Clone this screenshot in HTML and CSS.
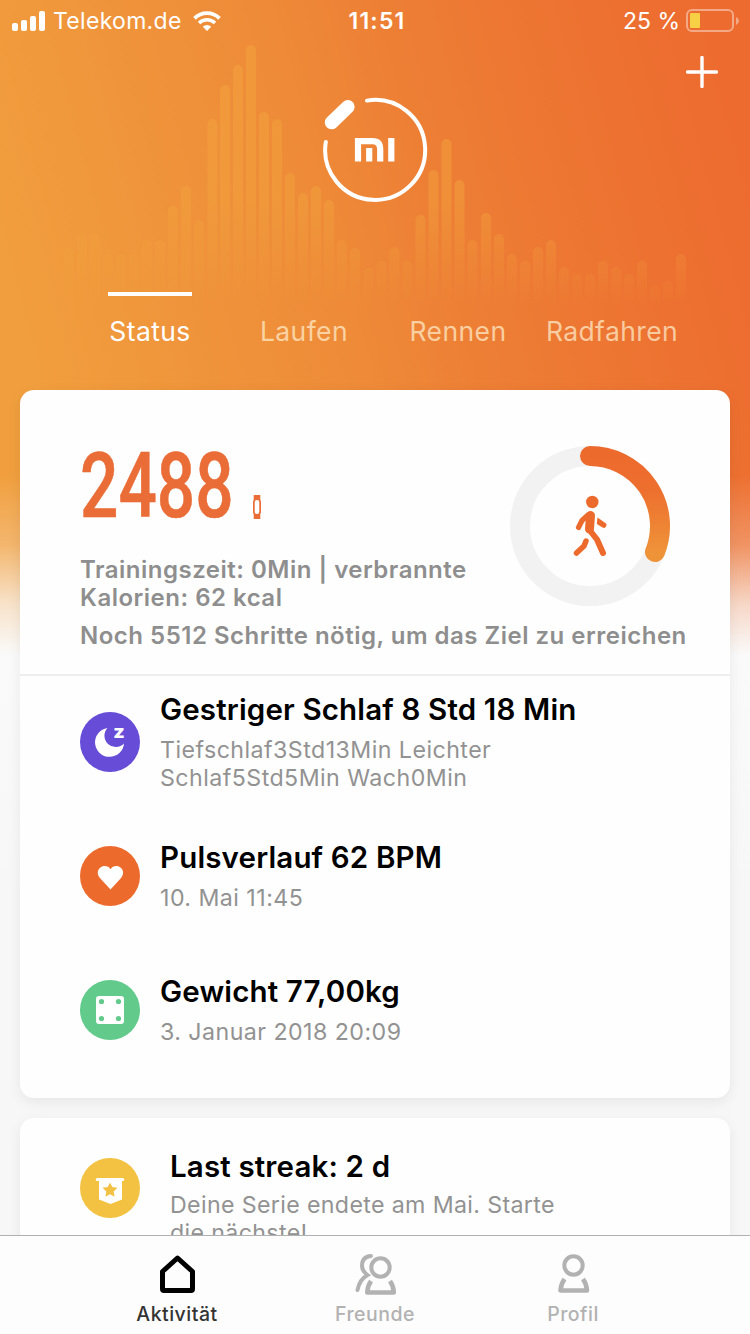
FILE: index.html
```html
<!DOCTYPE html>
<html lang="de">
<head>
  <meta charset="UTF-8">
  <title>Mi Fit — Aktivität</title>
  <meta name="viewport" content="width=750">
  <link rel="stylesheet" href="styles.css">
</head>
<body>
  <div class="app">
    <!-- Wave -->
    <svg class="wave" width="750" height="310" viewBox="0 0 750 310">
      <defs>
        <linearGradient id="waveFade" gradientUnits="userSpaceOnUse" x1="0" y1="40" x2="0" y2="305">
          <stop offset="0" stop-color="#f2a23c" stop-opacity=".55"/>
          <stop offset=".6" stop-color="#f2a23c" stop-opacity=".5"/>
          <stop offset="1" stop-color="#f2a23c" stop-opacity="0"/>
        </linearGradient>
      </defs>
      <path fill="none" stroke="url(#waveFade)" stroke-width="10" stroke-linecap="round" d="M69 305V253M82 305V239M95 305V239M108 305V259M121 305V259M134 305V259M147 305V245M160 305V245M173 305V211M186 305V191M199 305V225M212.500 305V124M225 305V90M238 305V70M251 305V50M264 305V117M277 305V124M290 305V178M303 305V198M316 305V191M329 305V205M342 305V245M355 305V253M368.500 305V273M381.500 305V266M394.500 305V252M407.500 305V266M420.500 305V220M433.500 305V175M446.500 305V144M459.500 305V185M472.500 305V245M486 305V218M499 305V239M512 305V259M525 305V266M538 305V252M551 305V245M564 305V272M577 305V279M590 305V279M603 305V266M616 305V272M629 305V279M642 305V266M655 305V291M668 305V286M681 305V259"/>
    </svg>

    <!-- Status bar -->
    <div class="statusbar">
      <div class="statusbar-left">
        <svg width="34" height="21" viewBox="0 0 34 21" fill="#fff">
          <rect x="0" y="12" width="6" height="8" rx="2"/>
          <rect x="9" y="9" width="6" height="11" rx="2"/>
          <rect x="18" y="5" width="6" height="15" rx="2"/>
          <rect x="27" y="0" width="6" height="20" rx="2"/>
        </svg>
        <span class="carrier">Telekom.de</span>
        <svg class="wifi" width="28" height="20" viewBox="0 0 28 20">
          <path d="M1.500 7.300a17.700 17.700 0 0 1 25 0" fill="none" stroke="#fff" stroke-width="3.800"/>
          <path d="M6 12a11.400 11.400 0 0 1 16 0" fill="none" stroke="#fff" stroke-width="3.400"/>
          <path d="M14 20l-4.200-4.200a6 6 0 0 1 8.400 0z" fill="#fff"/>
        </svg>
      </div>
      <div class="statusbar-time">11:51</div>
      <div class="statusbar-right">
        <span class="percent">25 %</span>
        <svg width="54" height="24" viewBox="0 0 54 24">
          <rect x="1" y="1" width="46" height="21" rx="5" fill="none" stroke="#fff" stroke-opacity=".42" stroke-width="2"/>
          <rect x="4" y="4" width="10" height="15" rx="1" fill="#f8d045"/>
          <path d="M50 8q3 1.500 3 4t-3 4z" fill="#fff" fill-opacity=".42"/>
        </svg>
      </div>
    </div>

    <!-- Header -->
    <header class="header">
      <svg class="logo" width="106" height="108" viewBox="0 0 106 108">
        <path d="M45 4.600A50 50 0 1 1 3.800 46" fill="none" stroke="#fff" stroke-width="4" stroke-linecap="round"/>
        <path d="M9.600 26.500L25.800 10.800" stroke="#fff" stroke-width="13.600" stroke-linecap="round"/>
        <g fill="none" stroke="#fff" stroke-width="6.200">
          <path d="M36 65.500V45.100h14.500q7.700 0 7.700 8v12.400"/>
          <path d="M47.200 52v13.500M69.300 42v23.500"/>
        </g>
      </svg>
      <svg class="add" width="32" height="32" viewBox="0 0 32 32">
        <path d="M16 1.500v29M1.500 16h29" stroke="#fff" stroke-width="3.400" stroke-linecap="round"/>
      </svg>
    </header>

    <nav class="tabs">
      <div class="tab active">Status</div>
      <div class="tab">Laufen</div>
      <div class="tab">Rennen</div>
      <div class="tab">Radfahren</div>
    </nav>

    <!-- Main card -->
    <section class="card">
      <div class="steps">
        <div>
          <div class="steps-count">
            <span class="steps-num">2488</span>
            <svg class="band" width="8" height="24" viewBox="0 0 8 24">
              <path d="M.7 0h6.600v5q.7 1 .7 2v10q0 1-.7 2v5H.7v-5Q0 18 0 17V7q0-1 .7-2z" fill="#ea6c36"/>
              <rect x="1.700" y="5" width="4.600" height="14" rx="2.300" fill="#fff"/>
            </svg>
          </div>
          <p class="steps-info">Trainingszeit: 0Min | verbrannte<br>Kalorien: 62 kcal</p>
        </div>
        <svg class="ring" width="160" height="160" viewBox="0 0 160 160">
          <defs>
            <linearGradient id="ringFill" x1="0" y1="0" x2="0" y2="1">
              <stop offset="0" stop-color="#ed6a2d"/>
              <stop offset=".35" stop-color="#ed6f2e"/>
              <stop offset="1" stop-color="#ef9339"/>
            </linearGradient>
          </defs>
          <circle cx="80" cy="80" r="70" fill="none" stroke="#f2f2f2" stroke-width="20"/>
          <path d="M80 10A70 70 0 0 1 145 106" fill="none" stroke="url(#ringFill)" stroke-width="20" stroke-linecap="round"/>
          <circle cx="82.300" cy="56" r="6.200" fill="#ed6a2d"/>
          <g fill="none" stroke="#ed6a2d" stroke-linecap="round" stroke-linejoin="round">
            <path d="M78 69L72 74.500L68.500 81.500" stroke-width="5.200"/>
            <path d="M80.500 69.500L79.500 83" stroke-width="9"/>
            <path d="M79.500 84L87 93.500L93 107" stroke-width="6"/>
            <path d="M66.500 107L74 100L76 95" stroke-width="5.500"/>
          </g>
          <path d="M87.500 71.500l7.500 5.200a2.600 2.600 0 0 1-2.500 4.800L86.800 78z" fill="#ed6a2d"/>
        </svg>
        <p class="steps-goal">Noch 5512 Schritte nötig, um das Ziel zu erreichen</p>
      </div>

      <div class="rows">
        <div class="row">
          <div class="row-icon sleep">
            <svg width="60" height="60" viewBox="0 0 60 60">
              <path d="M27.500 16A14.500 14.500 0 1 0 44 31.500A11 11 0 0 1 27.500 16z" fill="#fff"/>
              <text class="sleep-z" x="33.300" y="25.800" textLength="11.500" lengthAdjust="spacingAndGlyphs">z</text>
            </svg>
          </div>
          <div class="row-text">
            <div class="row-title">Gestriger Schlaf 8 Std 18 Min</div>
            <div class="row-sub">Tiefschlaf3Std13Min Leichter<br>Schlaf5Std5Min Wach0Min</div>
          </div>
        </div>

        <div class="row">
          <div class="row-icon pulse">
            <svg width="60" height="60" viewBox="0 0 60 60">
              <path d="M30.500 43.500L20.200 32.200C14.500 25.500 20.500 20 24.500 20q4 0 6 3.200Q32.500 20 36.500 20C40.500 20 46.500 25.500 40.800 32.200z" fill="#fff"/>
            </svg>
          </div>
          <div class="row-text">
            <div class="row-title">Pulsverlauf 62 BPM</div>
            <div class="row-sub">10. Mai 11:45</div>
          </div>
        </div>

        <div class="row">
          <div class="row-icon weight">
            <svg width="60" height="60" viewBox="0 0 60 60">
              <rect x="16" y="16" width="28" height="28" rx="3" fill="#fff"/>
              <g fill="#62ca8b">
                <circle cx="21.500" cy="21.500" r="2.600"/>
                <circle cx="38.500" cy="21.500" r="2.600"/>
                <circle cx="21.500" cy="38.500" r="2.600"/>
                <circle cx="38.500" cy="38.500" r="2.600"/>
              </g>
            </svg>
          </div>
          <div class="row-text">
            <div class="row-title">Gewicht 77,00kg</div>
            <div class="row-sub">3. Januar 2018 20:09</div>
          </div>
        </div>
      </div>
    </section>

    <!-- Streak card -->
    <section class="card streak">
      <div class="row-icon medal">
        <svg width="60" height="60" viewBox="0 0 60 60">
          <path d="M17.200 20h25.600a1.200 1.200 0 0 1 0 3H42v18.500L30.500 46L19 41.500V23h-1.800a1.200 1.200 0 0 1 0-3z" fill="#fff"/>
          <path d="M30 24.500l2.300 4.600 5.200.7-3.800 3.600.9 5.300L30 36.200l-4.600 2.500.9-5.300-3.800-3.600 5.200-.7z" fill="#f4c242"/>
        </svg>
      </div>
      <div class="streak-text">
        <div class="row-title">Last streak: 2 d</div>
        <div class="row-sub">Deine Serie endete am Mai. Starte<br>die nächste!</div>
      </div>
    </section>

    <!-- TabBar -->
    <nav class="tabbar">
      <div class="tabbar-btn active">
        <svg width="44" height="44" viewBox="0 0 44 44">
          <path d="M7.500 18.500L22.500 5L37.500 18.500V36q0 1.500-1.500 1.500H9Q7.500 37.500 7.500 36z" fill="none" stroke="#000" stroke-width="5" stroke-linejoin="round"/>
        </svg>
        <span>Aktivität</span>
      </div>
      <div class="tabbar-btn">
        <svg width="44" height="44" viewBox="0 0 44 44" fill="none" stroke="#b2b2b2" stroke-width="4" stroke-linecap="round">
          <circle cx="27.500" cy="14.500" r="9.200"/>
          <path d="M18 3Q9 3.500 9 13q0 5 5.500 9Q6.500 26.500 4.500 37"/>
          <path d="M18 28Q14.500 33 14.300 39.500H40.800Q40.500 33 37 28" stroke-width="4.600" stroke-linejoin="round" stroke-linecap="butt"/>
        </svg>
        <span>Freunde</span>
      </div>
      <div class="tabbar-btn">
        <svg width="44" height="44" viewBox="0 0 44 44" fill="none" stroke="#b2b2b2" stroke-width="4">
          <circle cx="22.500" cy="12.500" r="9.200"/>
          <path d="M13.500 26Q10 31 9.500 37.500H36Q35.500 31 32 26" stroke-width="4.600" stroke-linejoin="round"/>
        </svg>
        <span>Profil</span>
      </div>
    </nav>
  </div>
</body>
</html>
```

FILE: styles.css
```css
body {
  margin: 0;
  font-family: Inter, 'Liberation Sans', sans-serif;
}
svg {
  display: block;
  flex-shrink: 0;
}
.app {
  width: 750px;
  height: 1334px;
  overflow: hidden;
  position: relative;
  background:
    linear-gradient(to bottom, rgba(250,250,250,0) 475px, rgba(250,250,250,.25) 545px, rgba(250,250,250,.75) 605px, #fafafa 655px, #f7f7f7 900px),
    linear-gradient(75deg, #f19f3e 10%, #ee8a38 48%, #ed7f35 60%, #ed7532 76%, #ed6b2f 95%) 0 0 / 100% 660px no-repeat;
}
.wave {
  position: absolute;
  top: 0;
  left: 0;
}
/* Status bar */
.statusbar {
  box-sizing: border-box;
  position: relative;
  display: grid;
  grid-template-columns: 1fr auto 1fr;
  align-items: center;
  height: 40px;
  padding: 2px 10px 0 12px;
  color: #fff;
  font-size: 23px;
}
.statusbar-left, .statusbar-right {
  display: flex;
  align-items: center;
}
.statusbar-right {
  justify-content: flex-end;
}
.carrier {
  margin-left: 7px;
  letter-spacing: 0.3px;
}
.wifi {
  margin-left: 11px;
}
.statusbar-time {
  padding-left: 2px;
  font-weight: 600;
  letter-spacing: 1.2px;
}
.percent {
  margin-right: 6px;
}
/* Header */
.header {
  position: relative;
  display: flex;
  justify-content: center;
  height: 252px;
}
.logo {
  margin-top: 56px;
}
.add {
  position: absolute;
  top: 16px;
  right: 32px;
}
.tabs {
  position: relative;
  display: flex;
  height: 98px;
  padding-left: 73px;
}
.tab {
  width: 154px;
  padding-top: 23px;
  line-height: 32px;
  text-align: center;
  font-size: 26.500px;
  letter-spacing: 0.4px;
  color: rgba(255,238,205,.72);
}
.tab.active {
  color: #fff;
}
.tab.active::before {
  content: '';
  display: block;
  width: 84px;
  height: 4px;
  margin: -23px auto 19px;
  background: #fff;
}
/* Cards */
.card {
  position: relative;
  margin: 0 20px;
  height: 708px;
  background: #fefefe;
  border-radius: 14px;
  box-shadow: 0 4px 14px rgba(0,0,0,.07);
}
.steps {
  box-sizing: border-box;
  height: 286px;
  padding: 40px 0 0 60px;
  border-bottom: 2px solid #eee;
  display: grid;
  grid-template-columns: 430px 160px;
  grid-template-rows: 176px auto;
}
.steps-count {
  display: flex;
  height: 112px;
}
.steps-num {
  width: 173px;
  margin-top: 8px;
  font-family: Roboto, sans-serif;
  font-weight: 500;
  font-size: 91px;
  line-height: 96px;
  color: #ea6c36;
  -webkit-text-stroke: 0.6px #ea6c36;
  transform: scaleX(.742);
  transform-origin: left;
}
.band {
  margin-top: 65px;
}
.ring {
  margin-top: 16px;
}
.steps-info, .steps-goal {
  margin: 0;
  font-size: 24px;
  font-weight: 600;
  line-height: 28px;
  letter-spacing: 0.5px;
  color: #8e8e8e;
}
.steps-info {
  margin-top: 14px;
}
.steps-goal {
  grid-column: 1 / 3;
  margin-top: 16px;
  white-space: nowrap;
}
.rows {
  margin-top: -1px;
}
.row {
  display: flex;
  align-items: center;
  height: 134px;
  padding-left: 60px;
  gap: 20px;
}
.row-icon {
  width: 60px;
  height: 60px;
  border-radius: 50%;
  flex-shrink: 0;
}
.sleep { background: #674cd8; }
.pulse { background: #ed6a2d; }
.weight { background: #62ca8b; }
.medal { background: #f4c242; }
.sleep-z {
  font-size: 18px;
  font-weight: 800;
  fill: #fff;
}
.row-title {
  font-size: 29.500px;
  font-weight: 600;
  line-height: 35px;
  padding-bottom: 1px;
  letter-spacing: 0.15px;
  color: #000;
}
.row-sub {
  margin-top: 8px;
  font-size: 23.200px;
  line-height: 28px;
  letter-spacing: 0.45px;
  color: #929292;
}
.streak {
  display: flex;
  box-sizing: border-box;
  height: 240px;
  margin-top: 20px;
  padding: 40px 0 0 60px;
  gap: 30px;
}
.streak-text {
  margin-top: -9px;
}
.streak .row-sub {
  margin-top: 6px;
  letter-spacing: 0.35px;
}
/* TabBar */
.tabbar {
  position: absolute;
  left: 0;
  bottom: 0;
  box-sizing: border-box;
  width: 750px;
  height: 99px;
  padding: 17px 78px 0;
  display: flex;
  background: #fdfdfd;
  border-top: 1px solid #b0b0b0;
}
.tabbar-btn {
  flex: 1;
  display: flex;
  flex-direction: column;
  align-items: center;
  font-size: 19.500px;
  line-height: 24px;
  font-weight: 500;
  letter-spacing: 0.5px;
  color: #b2b2b2;
}
.tabbar-btn span {
  margin-top: 5px;
}
.tabbar-btn.active {
  color: #333;
}
```
